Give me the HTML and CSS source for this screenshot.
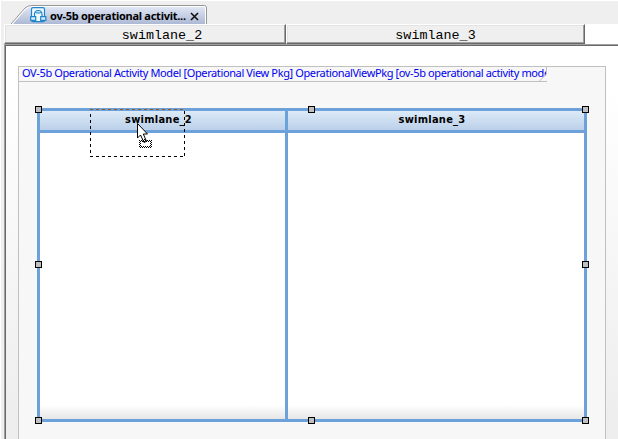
FILE: index.html
```html
<!DOCTYPE html>
<html lang="en">
<head>
<meta charset="utf-8">
<title>ov-5b operational activity model</title>
<link rel="stylesheet" href="styles.css">
</head>
<body>
<div class="app">
  <div class="tabs">
    <div class="tab">
      <svg class="tab-shape" width="198" height="19" viewBox="0 0 198 19">
        <defs><linearGradient id="tabfill" x1="0" y1="0" x2="0" y2="1"><stop offset="0" stop-color="#e0e6f4"/><stop offset="1" stop-color="#adb9d4"/></linearGradient></defs>
        <path d="M0 19L14 3Q17 .5 21 .5H193.500Q195.500 .5 195.500 3V19" fill="#fff" stroke="#969696"/>
        <path d="M2 19L15 4Q18 2 21 2H193Q194 2 194 4V19Z" fill="url(#tabfill)"/>
      </svg>
      <svg class="tab-icon" width="17" height="16" viewBox="0 0 17 16">
        <rect x="1.500" y=".7" width="13" height="14" rx="1.500" fill="#edf8ff" stroke="#2385c8" stroke-width="1.200"/>
        <path d="M4.500 9V7Q4.500 5 6 4.600M10.500 4.600Q12 5 12 7V9" fill="none" stroke="#2385c8" stroke-width="1.200"/>
        <rect x="5.800" y="3.500" width="5" height="2.500" rx="1" fill="#b9ddf5" stroke="#2385c8"/>
        <path d="M.7 9.600H5.700V13.400H.7ZM10.700 9.600H15.800V13.400H10.700Z" fill="#d6edfb" stroke="#2385c8" stroke-width="1.200"/>
      </svg>
      <span class="tab-label">ov-5b operational activit...</span>
      <svg class="tab-close" width="9" height="9" viewBox="0 0 9 9"><path d="M1 1L8 8M8 1L1 8" stroke="#111" stroke-width="1.600"/></svg>
    </div>
  </div>
  <div class="columns">
    <div class="column first"><span>swimlane_2</span></div>
    <div class="column second"><span>swimlane_3</span></div>
  </div>
  <div class="canvas">
    <div class="frame">
      <div class="frame-title">
        <span>OV-5b Operational Activity Model [Operational View Pkg] OperationalViewPkg [ov-5b operational activity mode</span>
        <svg class="corner" width="9" height="16" viewBox="0 0 9 16"><path d="M1 16L9 8V16Z" fill="#f7f7f7"/><path d="M0 15.500H1L8.500 8V0" fill="none" stroke="#c0c0c0"/></svg>
      </div>
      <div class="lanes">
        <div class="lane-head">swimlane_2</div>
        <div class="lane-head">swimlane_3</div>
        <div class="lane-body"></div>
        <div class="lane-body"></div>
        <i class="handle top left"></i><i class="handle top center"></i><i class="handle top right"></i>
        <i class="handle middle left"></i><i class="handle middle right"></i>
        <i class="handle bottom left"></i><i class="handle bottom center"></i><i class="handle bottom right"></i>
        <svg class="drag" width="95" height="48" viewBox="0 0 95 48">
          <defs><pattern id="checks" width="2" height="2" patternUnits="userSpaceOnUse"><path d="M0 0H1V1H0ZM1 1H2V2H1Z" shape-rendering="crispEdges"/></pattern></defs>
          <path d="M0 .5H95" stroke="#925b25" stroke-dasharray="3 3"/>
          <path d="M.5 5V48M94.500 2V48M0 47.500H95" fill="none" stroke="#000" stroke-dasharray="3 3"/>
          <path d="M47.500 14.500V29L50.500 26L54 33.500L56.500 32.300L53.300 25H57.500Z" fill="#fff" stroke="#000"/>
          <path fill="url(#checks)" fill-rule="evenodd" d="M51 30H56V31H62V39H49V31H51ZM51 33V37H60V33Z"/>
        </svg>
      </div>
    </div>
  </div>
</div>
</body>
</html>
```
FILE: styles.css
```css
* { box-sizing: border-box; }
body { margin: 0; background: #fff; overflow: hidden; }
.app {
  width: 618px; height: 439px; padding: 1px 0 0 1px;
  display: flex; flex-direction: column; background: #efefef;
  box-shadow: inset 1px 1px #fff; overflow: hidden;
}
.tabs { height: 23px; flex: none; padding: 4px 0 0 10px; }
.tab { position: relative; width: 198px; height: 19px; display: flex; align-items: center; padding-left: 19px; }
.tab-shape { position: absolute; left: 0; top: 0; }
.tab-icon { position: relative; flex: none; margin-top: 1px; }
.tab-label {
  position: relative; width: 137px; margin-left: 3px; white-space: nowrap;
  font: bold 11px/16px "Noto Sans", sans-serif; letter-spacing: -.26px; padding-top: 2px;
}
.tab-close { position: relative; flex: none; margin-left: 3px; margin-top: 3px; }
.columns { height: 20px; flex: none; margin-left: 3px; display: flex; background: #fff; }
.column {
  height: 20px; background: #efefef; color: #000;
  border: 1px solid; border-color: #fff #696969 #696969 #fff;
  box-shadow: inset -1px -1px #a0a0a0, inset 1px 1px #e3e3e3;
  text-align: center; font: 13.400px/21px "Liberation Mono", monospace;
}
.column.first { width: 282px; padding-left: 34px; }
.column.second { width: 299px; }
.column span { display: block; }
.canvas {
  flex: 1; margin-left: 3px; padding: 21px 0 0 13px;
  border-top: 1px solid #a0a0a0; border-left: 1px solid #a0a0a0;
  box-shadow: inset 1px 1px #696969;
  background: linear-gradient(#fff 10%, #eee 90%);
}
.frame { width: 588px; height: 390px; border: solid #c0c0c0; border-width: 1px 1px 0; background: #f7f7f7; }
.frame-title {
  position: relative; width: 528px; height: 15px; padding-left: 3px;
  overflow: hidden; border-bottom: 1px solid #c0c0c0; white-space: nowrap;
  color: #0000f0; font: 11px/12px "Noto Sans", sans-serif; letter-spacing: -.38px;
}
.corner { position: absolute; right: 0; top: -1px; height: 16px; }
.lanes {
  position: relative; width: 550px; height: 314px; margin: 26px 0 0 18px;
  display: grid; grid-template: 19px 286px / 245px 296px; gap: 3px;
  padding: 3px; background: #6ca2d9;
}
.lane-head {
  background: linear-gradient(#dceaf8, #bbd0e9); padding-right: 8px;
  text-align: center; font: bold 11px/17px "DejaVu Sans Condensed", sans-serif; letter-spacing: .25px; color: #000;
}
.lane-body { background: linear-gradient(#fff 272px, #e6e6e6); }
.handle { position: absolute; width: 7px; height: 7px; border: 1px solid #000; background: #c0c0c0; }
.top { top: -2px; }
.middle { top: 153px; }
.bottom { bottom: -2px; }
.left { left: -2px; }
.center { left: 271px; }
.right { right: -2px; }
.drag { position: absolute; left: 53px; top: 1px; }
```
